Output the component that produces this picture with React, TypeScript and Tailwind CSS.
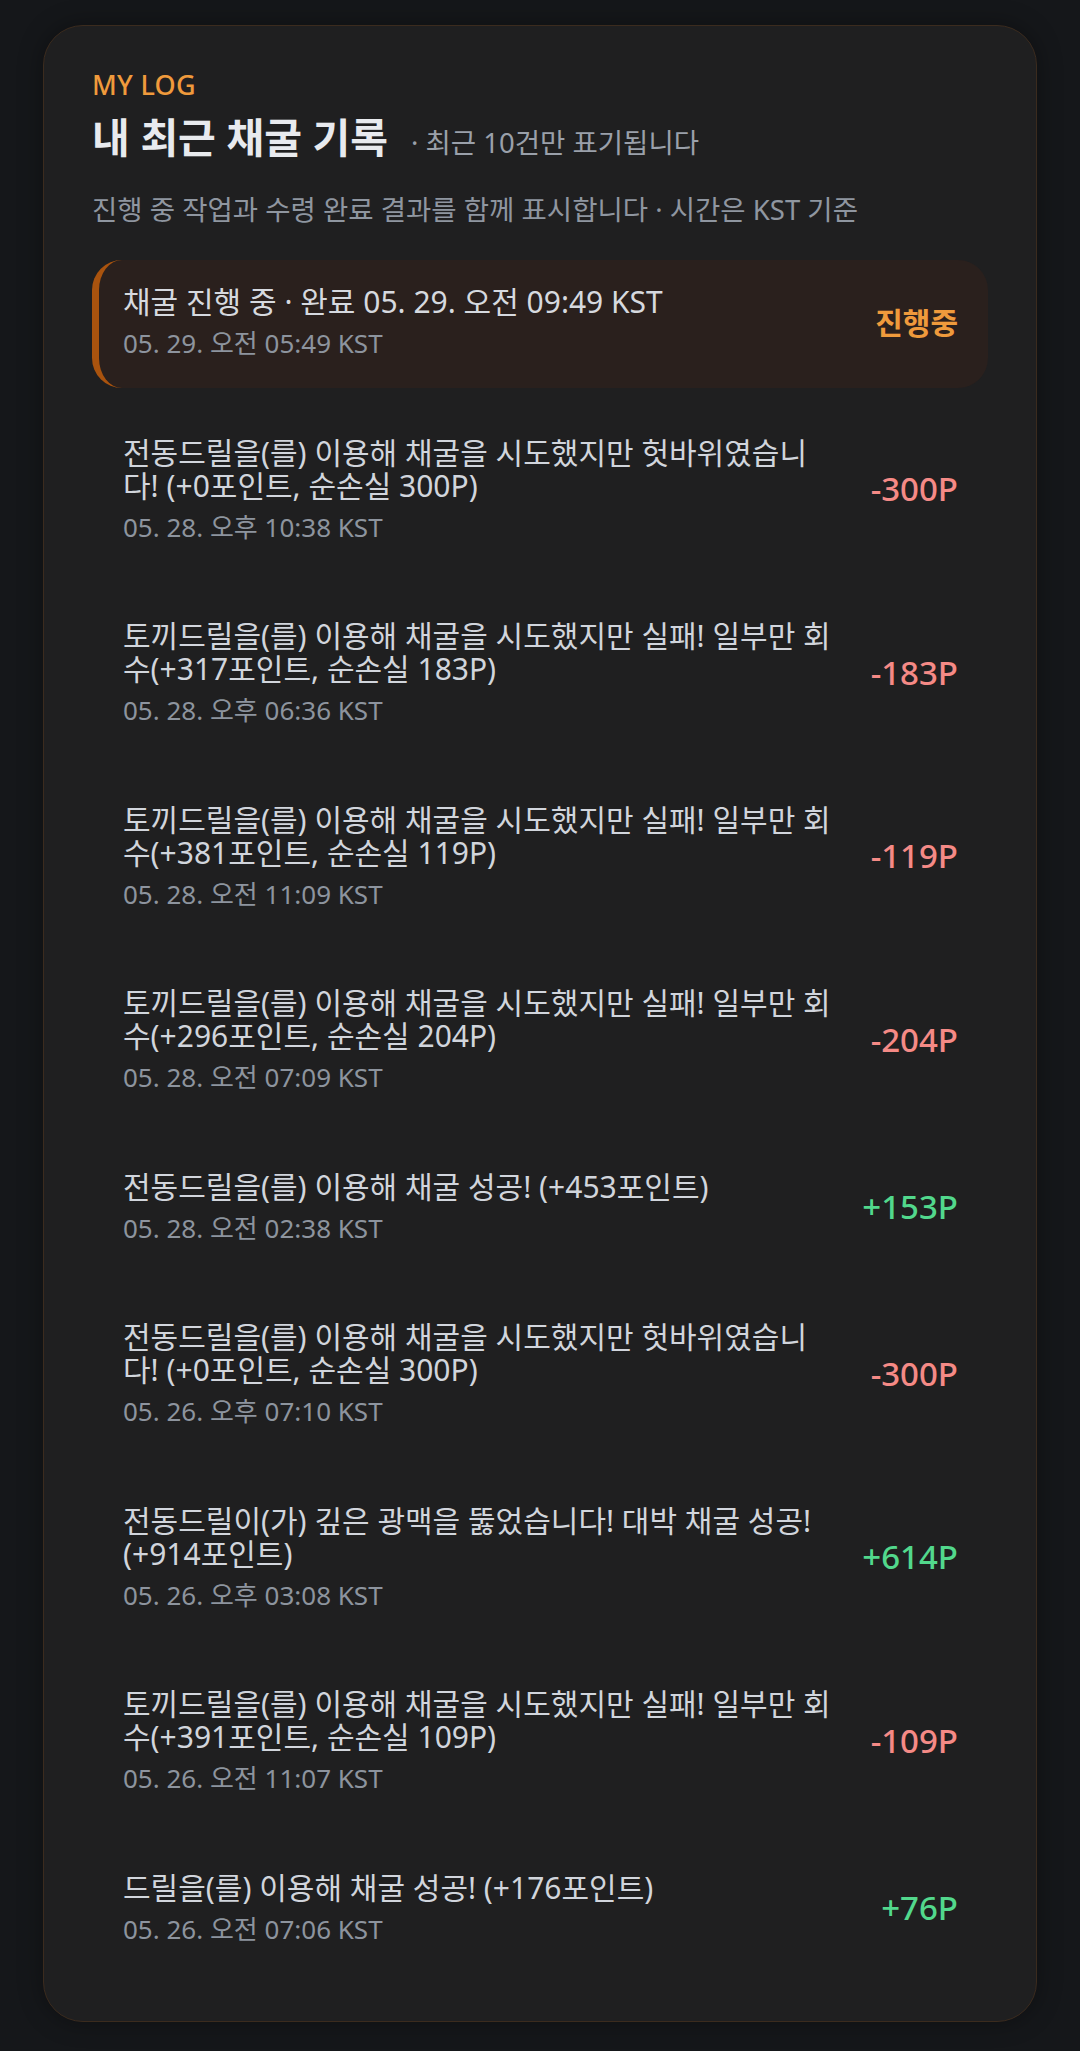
import React from "react";

type Item = { title: string; date: string; value: string; tone: "neg" | "pos" };

const items: Item[] = [
  { title: "전동드릴을(를) 이용해 채굴을 시도했지만 헛바위였습니다! (+0포인트, 순손실 300P)", date: "05. 28. 오후 10:38 KST", value: "-300P", tone: "neg" },
  { title: "토끼드릴을(를) 이용해 채굴을 시도했지만 실패! 일부만 회수(+317포인트, 순손실 183P)", date: "05. 28. 오후 06:36 KST", value: "-183P", tone: "neg" },
  { title: "토끼드릴을(를) 이용해 채굴을 시도했지만 실패! 일부만 회수(+381포인트, 순손실 119P)", date: "05. 28. 오전 11:09 KST", value: "-119P", tone: "neg" },
  { title: "토끼드릴을(를) 이용해 채굴을 시도했지만 실패! 일부만 회수(+296포인트, 순손실 204P)", date: "05. 28. 오전 07:09 KST", value: "-204P", tone: "neg" },
  { title: "전동드릴을(를) 이용해 채굴 성공! (+453포인트)", date: "05. 28. 오전 02:38 KST", value: "+153P", tone: "pos" },
  { title: "전동드릴을(를) 이용해 채굴을 시도했지만 헛바위였습니다! (+0포인트, 순손실 300P)", date: "05. 26. 오후 07:10 KST", value: "-300P", tone: "neg" },
  { title: "전동드릴이(가) 깊은 광맥을 뚫었습니다! 대박 채굴 성공! (+914포인트)", date: "05. 26. 오후 03:08 KST", value: "+614P", tone: "pos" },
  { title: "토끼드릴을(를) 이용해 채굴을 시도했지만 실패! 일부만 회수(+391포인트, 순손실 109P)", date: "05. 26. 오전 11:07 KST", value: "-109P", tone: "neg" },
  { title: "드릴을(를) 이용해 채굴 성공! (+176포인트)", date: "05. 26. 오전 07:06 KST", value: "+76P", tone: "pos" },
];

const FONT = { fontFamily: '"Noto Sans", "Noto Sans CJK KR", sans-serif' };

export default function App() {
  return (
    <div className="min-h-[2051px] w-full bg-[#15171a] pt-[25px] pb-[28px] px-[43px]" style={FONT}>
      <div className="rounded-[40px] border border-[#3b2b1e] bg-[#1f1f20] px-12 pt-[42px] pb-[48px] shadow-[0_0_24px_rgba(0,0,0,0.35)]">
        <div className="text-[27px] leading-[34px] font-medium tracking-[0.01em] text-[#ef9a3c]">MY LOG</div>
        <div className="mt-[9px] flex items-baseline">
          <h2 className="text-[41px] leading-[52px] font-bold text-[#e8eaee]">내 최근 채굴 기록</h2>
          <span className="ml-[23px] text-[27.5px] text-[#9aa0aa]">· 최근 10건만 표기됩니다</span>
        </div>
        <p className="mt-[30px] text-[27.5px] leading-[34px] text-[#8f96a0]">
          진행 중 작업과 수령 완료 결과를 함께 표시합니다 · 시간은 KST 기준
        </p>
        <div className="mt-[33px] flex flex-col gap-[23px]">
          <div className="flex items-center rounded-[30px] border-l-[7px] border-[#a9530e] bg-[#2a201d] pl-[24px] pr-[30px] pt-[25px] pb-[29px]">
            <div className="min-w-0 flex-1">
              <div className="text-[30px] leading-[33px] text-[#d6d9df]">채굴 진행 중 · 완료 05. 29. 오전 09:49 KST</div>
              <div className="mt-[10px] text-[26px] leading-[30.5px] text-[#8d949e]">05. 29. 오전 05:49 KST</div>
            </div>
            <div className="ml-4 shrink-0 text-[30px] font-bold text-[#ef9a3c]">진행중</div>
          </div>
          {items.map((it, i) => (
            <div key={i} className="flex items-center pl-[31px] pr-[30px] pt-[25px] pb-[29px]">
              <div className="min-w-0 flex-1">
                <div className="text-[30px] leading-[33px] text-[#d1d5dc]">{it.title}</div>
                <div className="mt-[10px] text-[26px] leading-[30.5px] text-[#8d949e]">{it.date}</div>
              </div>
              <div
                className={
                  "ml-4 w-[103px] shrink-0 text-right text-[33px] font-medium " +
                  (it.tone === "neg" ? "text-[#f58a86]" : "text-[#52d88c]")
                }
              >
                {it.value}
              </div>
            </div>
          ))}
        </div>
      </div>
    </div>
  );
}
